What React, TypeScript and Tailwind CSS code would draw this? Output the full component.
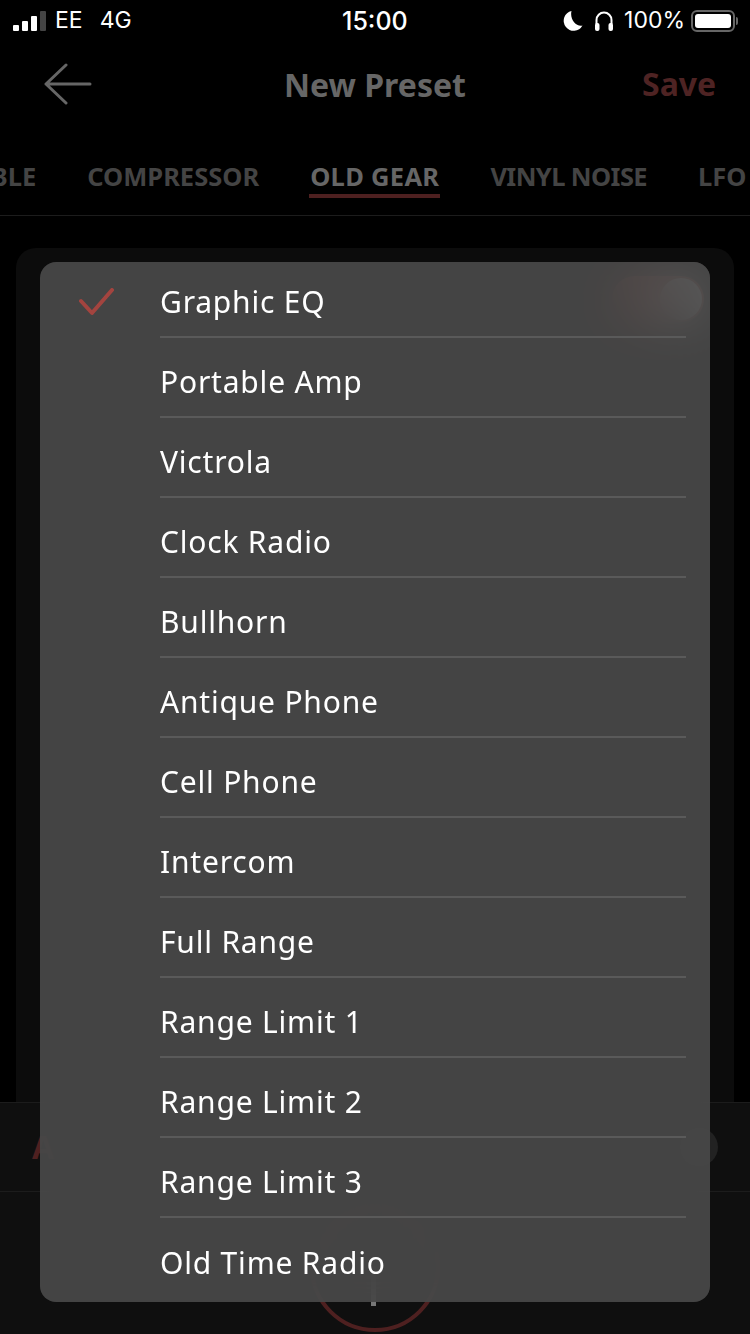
import React from "react";

const options = [
  "Graphic EQ", "Portable Amp", "Victrola", "Clock Radio", "Bullhorn", "Antique Phone", "Cell Phone",
  "Intercom", "Full Range", "Range Limit 1", "Range Limit 2", "Range Limit 3", "Old Time Radio",
];

const tabs = [
  { label: "TREBLE", cls: "text-[#444]" },
  { label: "COMPRESSOR", cls: "text-[#444]" },
  { label: "OLD GEAR", cls: "text-[#666] tracking-[0.3px]" },
  { label: "VINYL NOISE", cls: "text-[#444] tracking-[-0.6px]" },
  { label: "LFO", cls: "text-[#444]" },
];

function StatusBar() {
  return (
    <div className="relative flex h-10 items-center justify-between pl-[13px] pr-[12px] pt-[1px] font-['Inter'] text-white">
      <div className="flex items-center">
        <div className="flex items-end gap-[3px]">
          <span className="h-[6px] w-[6px] rounded-[1px] bg-white" />
          <span className="h-[10px] w-[6px] rounded-[1px] bg-white" />
          <span className="h-[15px] w-[6px] rounded-[1px] bg-white" />
          <span className="h-[20px] w-[6px] rounded-[1px] bg-[#444]" />
        </div>
        <span className="ml-[9px] text-[23px] leading-none">EE</span>
        <span className="ml-[17px] text-[23px] leading-none">4G</span>
      </div>
      <span className="absolute left-[342px] top-[7px] text-[25px] font-medium leading-[28px]">15:00</span>
      <div className="flex items-center">
        <svg width="20" height="22" viewBox="0 0 20 22" className="mr-[11px]">
          <path d="M8.5 1A10 10 0 1 0 19.5 15.5C13 17 6.5 9 8.5 1Z" fill="#fff" />
        </svg>
        <svg width="20" height="22" viewBox="0 0 20 22" className="mr-[10px]" fill="none">
          <path d="M2.5 14V10a7.5 7.5 0 0 1 15 0v4" stroke="#fff" strokeWidth="2" />
          <rect x="1" y="13" width="4.5" height="8" rx="2" fill="#fff" />
          <rect x="14.5" y="13" width="4.5" height="8" rx="2" fill="#fff" />
        </svg>
        <span className="text-[23px] leading-none">100%</span>
        <div className="ml-[6px] flex items-center">
          <div className="flex h-[22px] w-[44px] items-center rounded-[6px] border-2 border-[#666] p-[2px]">
            <div className="h-full w-full rounded-[3px] bg-white" />
          </div>
          <div className="ml-[1px] h-[8px] w-[2px] rounded-r bg-[#666]" />
        </div>
      </div>
    </div>
  );
}

function Header() {
  return (
    <div className="relative flex h-[92px] items-center justify-center pb-[2px]">
      <svg width="48" height="42" viewBox="0 0 48 42" fill="none" className="absolute left-[44px] top-[23px]">
        <path d="M22 2 2 21l20 19M2 21h44" stroke="#666" strokeWidth="3" strokeLinecap="round" strokeLinejoin="round" />
      </svg>
      <span className="text-[32px] font-bold leading-none text-[#666]">New Preset</span>
      <span className="absolute left-[642px] top-[28px] text-[32px] font-bold leading-none text-[#4e2323]">Save</span>
    </div>
  );
}

function Tabs() {
  return (
    <div className="relative h-[84px] overflow-hidden border-b border-[#1c1c1c]">
      <div className="absolute left-[-55px] top-[29px] flex gap-[51px] whitespace-nowrap text-[25.5px] font-bold leading-[30px]">
        {tabs.map((t) => (
          <div key={t.label} className={t.cls}>
            {t.label}
            {t.label === "OLD GEAR" && <div className="-mx-[1px] mt-[3px] h-[4px] bg-[#4e2020]" />}
          </div>
        ))}
      </div>
    </div>
  );
}

function Background() {
  return (
    <div className="flex h-full flex-col bg-black">
      <StatusBar />
      <Header />
      <Tabs />
      <div className="flex-1 px-4 pt-8">
        <div className="flex h-full flex-col rounded-t-[20px] bg-[#0c0c0c] px-[30px] pt-[28px]">
          <div className="flex items-center justify-end">
            <div className="flex h-[46px] w-[92px] items-center justify-end rounded-full bg-[#a03a30] p-[2px]">
              <div className="h-[42px] w-[42px] rounded-full bg-white" />
            </div>
          </div>
        </div>
      </div>
      <div className="flex h-[90px] items-center justify-between border-y border-[#1c1c1c] bg-[#0f0f0f] pl-[32px] pr-[32px]">
        <span className="text-[32px] font-bold text-[#4e2020]">A</span>
        <div className="h-[38px] w-[38px] rounded-full bg-[#222]" />
      </div>
      <div className="flex h-[142px] justify-center overflow-hidden bg-[#0f0f0f] pt-[10px]">
        <div className="relative h-[130px] w-[130px] shrink-0 rounded-full border-[4px] border-[#4e2020]">
          <div className="absolute left-[57px] top-[60px] h-[40px] w-[5px] bg-[#777]" />
        </div>
      </div>
    </div>
  );
}

function Menu() {
  return (
    <div className="absolute left-[40px] top-[262px] w-[670px] overflow-hidden rounded-[16px] bg-[#4a4a4a]/90 backdrop-blur-xl">
      {options.map((name, i) => (
        <div key={name} className={`relative ml-[120px] mr-[24px] flex items-center ${i === 0 ? "h-[76px] pt-[6px]" : i === options.length - 1 ? "h-[84px] pt-[6px]" : "h-[80px] pt-[10px]"} ${i < options.length - 1 ? "border-b-2 border-[#5a5a5a]" : ""}`}>
          {i === 0 && (
            <svg width="36" height="28" viewBox="0 0 36 28" fill="none" className="absolute left-[-81px] top-[26px]">
              <path d="M2 13l11 12L33 2" stroke="#a3443f" strokeWidth="4" strokeLinecap="round" strokeLinejoin="round" />
            </svg>
          )}
          <span className="text-[30px] leading-none tracking-[0.8px] text-white">{name}</span>
        </div>
      ))}
    </div>
  );
}

export default function App() {
  return (
    <div className="relative h-[1334px] w-[750px] overflow-hidden" style={{ fontFamily: '"Noto Sans", "Open Sans", sans-serif' }}>
      <Background />
      <Menu />
    </div>
  );
}
